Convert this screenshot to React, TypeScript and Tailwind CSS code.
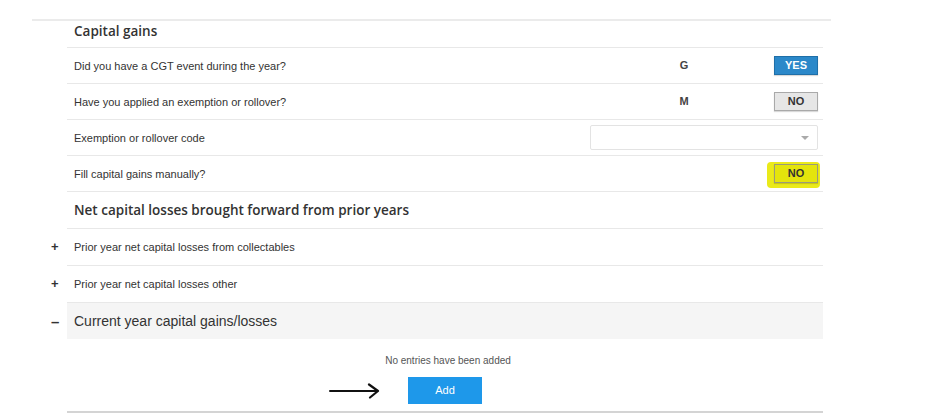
import { useState } from 'react';

type YesNo = 'YES' | 'NO';

function ToggleButton({ value, highlight }: { value: YesNo; highlight?: boolean }) {
  const yes = value === 'YES';
  return (
    <span className="relative inline-flex">
      {highlight && (
        <span className="absolute -left-[7px] -right-[2px] -top-[2px] -bottom-[5px] rounded-[4px] bg-[#eaea1a]"></span>
      )}
      <button
        className={`relative flex h-[19px] w-[44px] items-center justify-center border text-[11px] font-bold font-['Liberation_Sans',Arial,sans-serif] shadow-[0_1px_1px_rgba(0,0,0,0.15)] ${
          yes
            ? 'border-[#1f6fa8] bg-[#2b88c9] text-white'
            : highlight
            ? 'border-[#9a9a7a] bg-[#e4e40c] text-[#333]'
            : 'border-[#a9a9a9] bg-[#e6e6e6] text-[#333]'
        }`}
      >
        {value}
      </button>
    </span>
  );
}

function QuestionRow({ label, code, children }: { label: string; code?: string; children?: React.ReactNode }) {
  return (
    <div className="flex h-[36px] items-center border-b border-[#e8e8e8] pl-[7px] pr-[5px]">
      <span className="flex-1 pt-[1px] text-[11px] text-[#333]">{label}</span>
      {code && <span className="w-[30px] pr-[75px] box-content text-center text-[11px] font-bold text-[#444]">{code}</span>}
      {children}
    </div>
  );
}

function ExpandRow({ label }: { label: string }) {
  return (
    <div className="relative flex h-[37px] items-center border-b border-[#e8e8e8] pl-[7px]">
      <span className="absolute -left-[16px] text-[13px] font-bold text-[#333]">+</span>
      <span className="text-[11px] text-[#333]">{label}</span>
    </div>
  );
}

export default function App() {
  const [entries] = useState<string[]>([]);

  return (
    <div className="h-[415px] w-[929px] overflow-hidden bg-white font-['Liberation_Sans',Arial,sans-serif]">
      <div className="ml-[32px] mt-[19px] w-[799px] border-t-2 border-[#ebebeb]">
        <div className="ml-[35px] w-[756px]">
          <div className="flex h-[27px] items-start border-b border-[#e8e8e8] pl-[7px]">
            <h2 className="font-['Open_Sans',sans-serif] text-[13.5px] font-semibold leading-[20px] text-[#333]">Capital gains</h2>
          </div>

          <QuestionRow label="Did you have a CGT event during the year?" code="G">
            <ToggleButton value="YES" />
          </QuestionRow>
          <QuestionRow label="Have you applied an exemption or rollover?" code="M">
            <ToggleButton value="NO" />
          </QuestionRow>
          <QuestionRow label="Exemption or rollover code">
            <div className="flex h-[25px] w-[228px] items-center justify-end rounded-[2px] border border-[#e3e3e3] bg-white pr-[8px]">
              <span className="h-0 w-0 border-x-[4px] border-t-[4px] border-x-transparent border-t-[#aaa]"></span>
            </div>
          </QuestionRow>
          <QuestionRow label="Fill capital gains manually?">
            <ToggleButton value="NO" highlight />
          </QuestionRow>

          <div className="flex h-[37px] items-center border-b border-[#e8e8e8] pl-[7px]">
            <h2 className="font-['Open_Sans',sans-serif] text-[13.5px] font-semibold text-[#333]">
              Net capital losses brought forward from prior years
            </h2>
          </div>

          <ExpandRow label="Prior year net capital losses from collectables" />
          <ExpandRow label="Prior year net capital losses other" />

          <div className="relative flex h-[36px] items-center bg-[#f5f5f5] pl-[7px]">
            <span className="absolute -left-[16px] top-[8px] text-[15px] font-bold text-[#333]">–</span>
            <span className="text-[14px] text-[#333]">Current year capital gains/losses</span>
          </div>

          <div className="flex flex-col items-center border-b-2 border-[#d4d4d4] pb-[7px] pt-[14px]">
            {entries.length === 0 && (
              <p className="ml-[6px] text-[10px] text-[#555]">No entries have been added</p>
            )}
            <div className="relative mt-[9px]">
              <svg className="absolute -left-[79px] top-[6px]" width="52" height="16" viewBox="0 0 52 16" fill="none">
                <path d="M1 8 H48" stroke="#111" strokeWidth="2" strokeLinecap="round" />
                <path d="M40 1.5 L49 8 L41 14.5" stroke="#111" strokeWidth="2.2" strokeLinecap="round" strokeLinejoin="round" />
              </svg>
              <button className="h-[27px] w-[74px] bg-[#1e98ea] text-[11px] text-white">Add</button>
            </div>
          </div>
        </div>
      </div>
    </div>
  );
}
